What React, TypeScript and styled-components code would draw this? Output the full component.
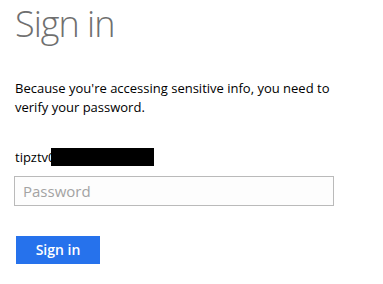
import React from "react";
import styled, { createGlobalStyle } from "styled-components";

const Global = createGlobalStyle`
  html, body { margin: 0; padding: 0; background: #fff; }
  body { font-family: "Open Sans", "Noto Sans", sans-serif; color: #000; }
`;

const Page = styled.div`
  padding: 0 0 0 15px;
  width: 383px;
  height: 284px;
  box-sizing: border-box;
`;

const Title = styled.h1`
  margin: 0;
  font-family: "Open Sans", sans-serif;
  font-weight: 300;
  font-size: 36px;
  line-height: 48px;
  color: #6f6f6f;
  letter-spacing: -1px;
`;

const Intro = styled.p`
  margin: 31px 0 0 0;
  font-size: 13px;
  line-height: 19px;
  width: 330px;
`;

const User = styled.div`
  margin-top: 31px;
  height: 18px;
  font-size: 13px;
  line-height: 18px;
  display: flex;
  align-items: center;
`;

const Redact = styled.span`
  display: block;
  width: 103px;
  height: 18px;
  background: #000;
  margin-left: -5px;
`;

const Input = styled.input`
  display: block;
  margin: 10px 0 0 -1px;
  width: 320px;
  height: 30px;
  box-sizing: border-box;
  border: 1px solid #bababa;
  background: #fdfdfd;
  padding: 0 8px;
  font-family: "Open Sans", sans-serif;
  font-size: 15px;
  outline: none;
  &::placeholder { color: #a3a3a3; }
`;

const Button = styled.button`
  display: block;
  margin: 30px 0 0 1px;
  width: 84px;
  height: 28px;
  border: none;
  background: #2672ec;
  color: #fff;
  font-family: "Open Sans", sans-serif;
  font-weight: 600;
  font-size: 14px;
  padding: 0 0 2px 0;
`;

export default function App() {
  return (
    <>
      <Global />
      <Page>
        <Title>Sign in</Title>
        <Intro>Because you're accessing sensitive info, you need to verify your password.</Intro>
        <User>
          <span>tipztv0</span>
          <Redact />
        </User>
        <Input type="password" placeholder="Password" />
        <Button>Sign in</Button>
      </Page>
    </>
  );
}
